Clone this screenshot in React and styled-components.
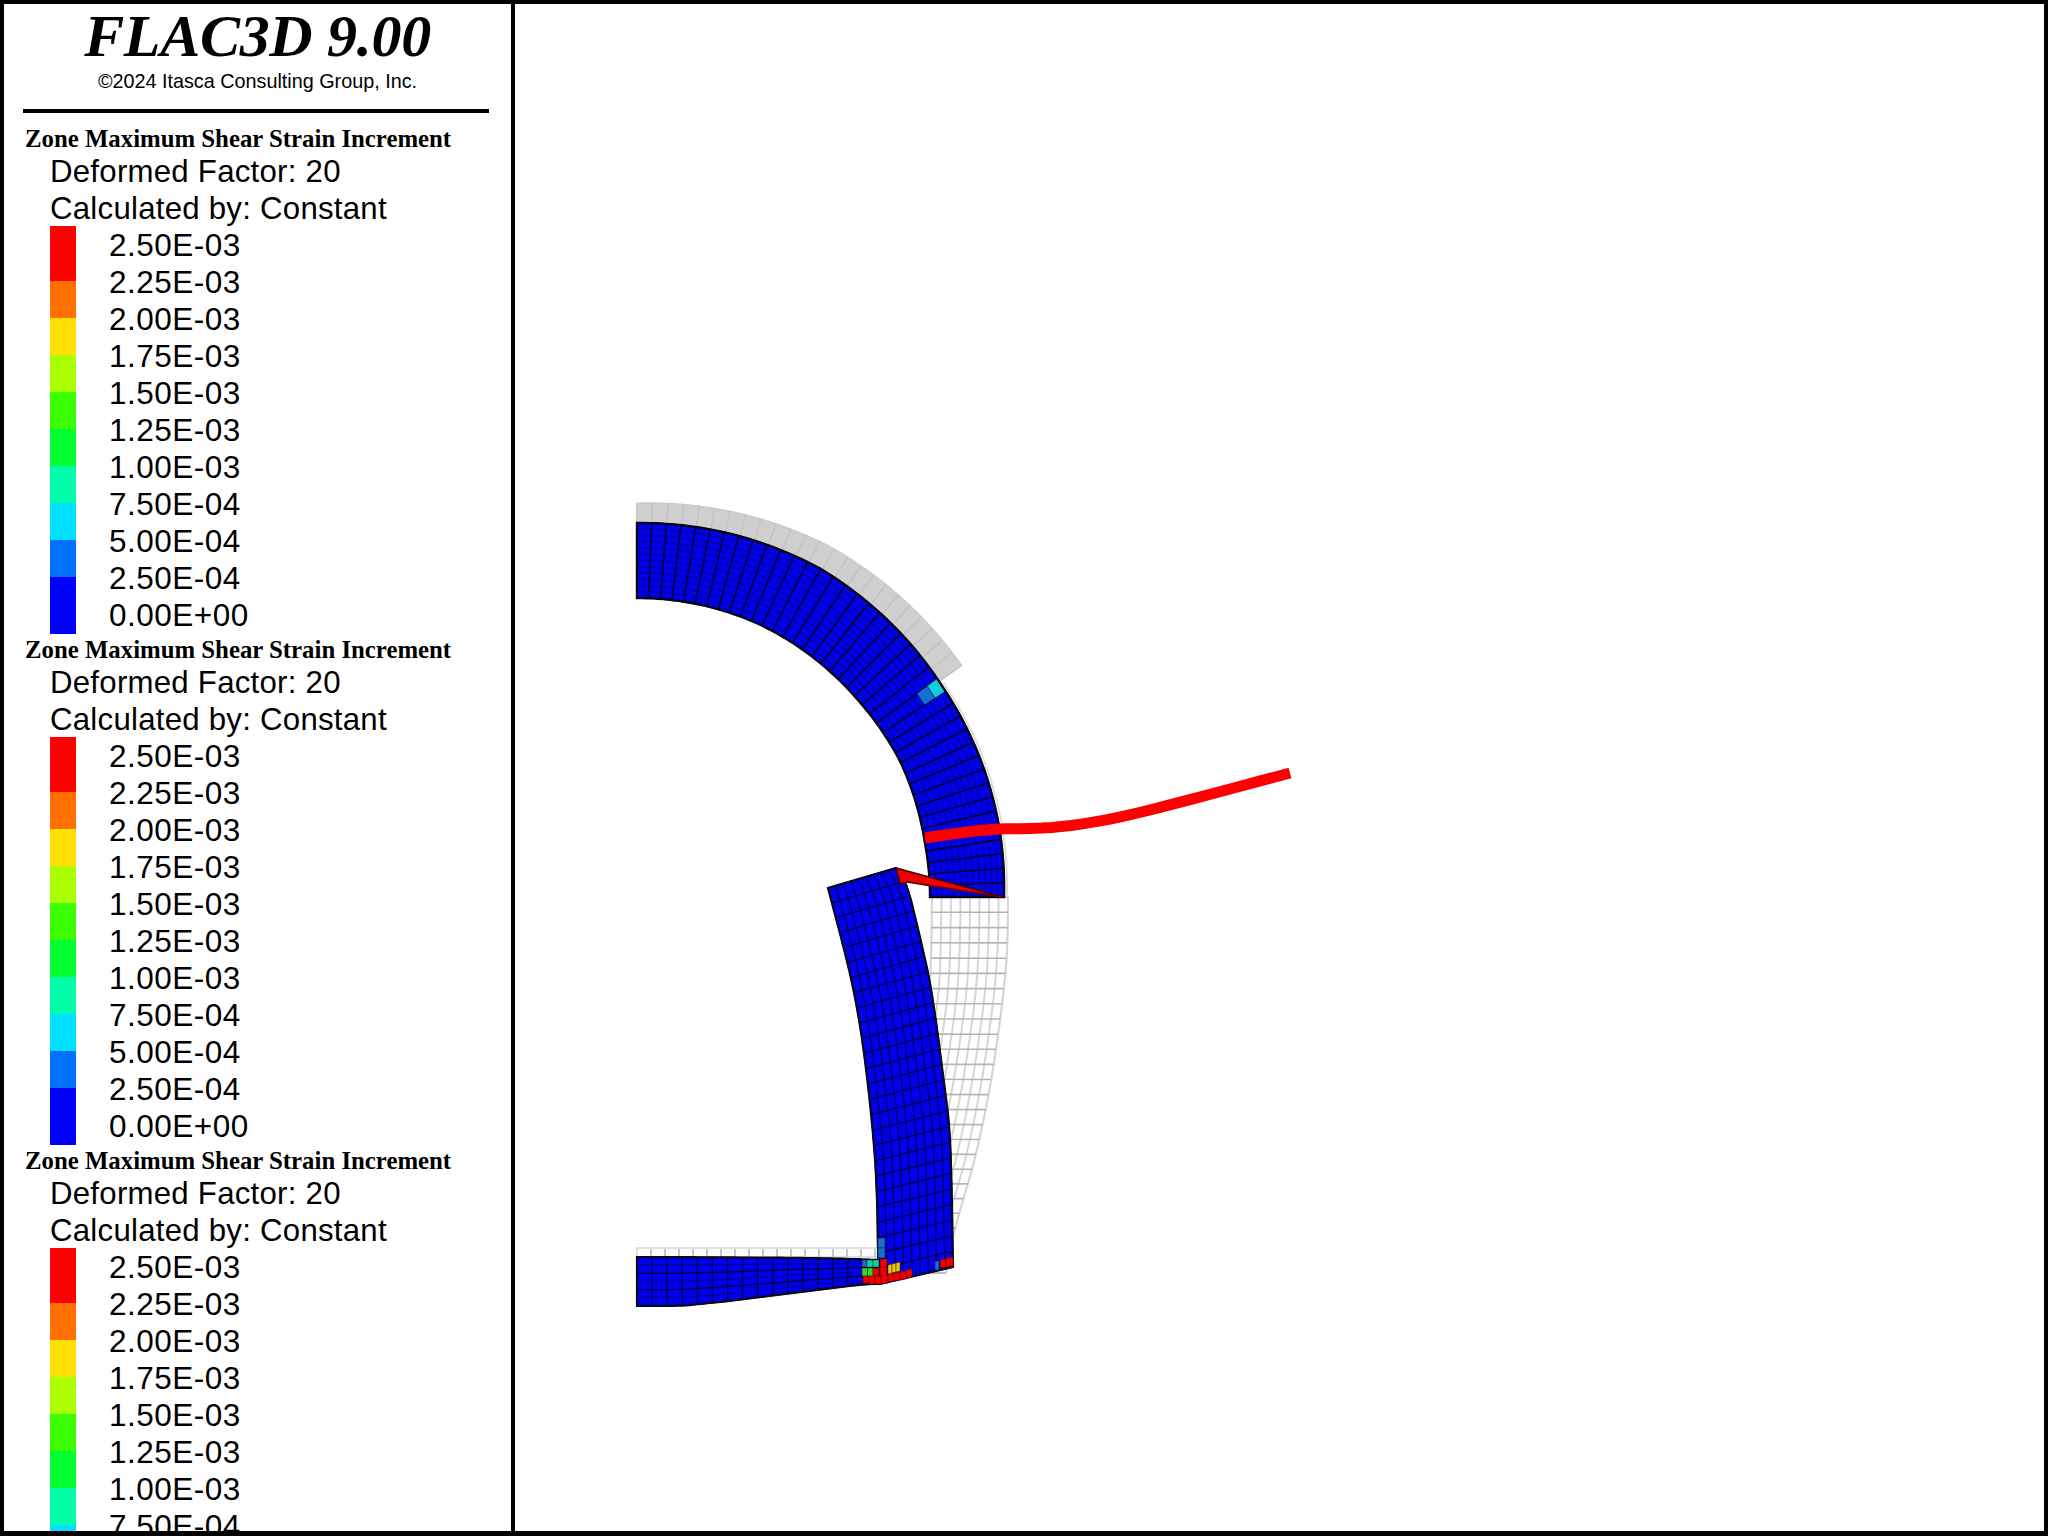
import React from "react";
import styled, { createGlobalStyle } from "styled-components";

const GlobalStyle = createGlobalStyle`
  html, body {
    margin: 0;
    padding: 0;
    background: #fff;
  }
`;

const Frame = styled.div`
  width: 2048px;
  height: 1536px;
  box-sizing: border-box;
  border: 4px solid #000;
  border-bottom-width: 5px;
  display: flex;
  overflow: hidden;
  background: #fff;
  color: #000;
`;

const Sidebar = styled.aside`
  width: 511px;
  flex: none;
  box-sizing: border-box;
  border-right: 4px solid #000;
  overflow: hidden;
  display: flex;
  flex-direction: column;
`;

const Header = styled.header`
  height: 119px;
  flex: none;
  padding-top: 3px;
  box-sizing: border-box;
  display: flex;
  flex-direction: column;
  align-items: center;
  position: relative;
`;

const ProductName = styled.h1`
  margin: 0;
  height: 59px;
  font-family: "Liberation Serif", "Times New Roman", serif;
  font-style: italic;
  font-weight: 700;
  font-size: 60px;
  line-height: 59px;
  letter-spacing: -0.3px;
  white-space: nowrap;
`;

const Copyright = styled.div`
  height: 30px;
  margin-top: 1px;
  font-family: "Liberation Sans", Arial, sans-serif;
  font-size: 19.8px;
  line-height: 29px;
  white-space: nowrap;
`;

const Rule = styled.hr`
  position: absolute;
  left: 19px;
  width: 466px;
  top: 105px;
  height: 4px;
  margin: 0;
  border: 0;
  background: #000;
`;

const LegendBlock = styled.section`
  height: 511px;
  flex: none;
  padding-left: 21px;
  box-sizing: border-box;
`;

const LegendTitle = styled.div`
  height: 29px;
  font-family: "Liberation Serif", "Times New Roman", serif;
  font-weight: 700;
  font-size: 24.8px;
  line-height: 32px;
  white-space: nowrap;
`;

const InfoLine = styled.div`
  height: 37px;
  margin-left: 25px;
  font-family: "Liberation Sans", Arial, sans-serif;
  font-size: 31.2px;
  letter-spacing: 0.25px;
  line-height: 39px;
  white-space: nowrap;
`;

const Scale = styled.div`
  display: flex;
  margin-left: 25px;
`;

const ColorBar = styled.div`
  width: 26px;
  height: 408px;
  flex: none;
  display: flex;
  flex-direction: column;
`;

const ColorStep = styled.div`
  height: ${(props) => props.$size}px;
  background: ${(props) => props.$color};
`;

const ScaleLabels = styled.div`
  margin-left: 33px;
`;

const ScaleLabel = styled.div`
  height: 37px;
  font-family: "Liberation Sans", Arial, sans-serif;
  font-size: 31.5px;
  letter-spacing: 0.5px;
  line-height: 38px;
  white-space: nowrap;
`;

const Viewport = styled.main`
  flex: 1;
  min-width: 0;
`;

const PlotSvg = styled.svg`
  display: block;
  width: 1529px;
  height: 1527px;
`;

const STEPS = [
  ["#ff0000", 55],
  ["#ff7000", 37],
  ["#ffe000", 37],
  ["#aaff00", 37],
  ["#3cff00", 37],
  ["#00ff33", 37],
  ["#00ffaa", 37],
  ["#00e0ff", 37],
  ["#0070ff", 37],
  ["#0000ff", 57],
];

const LABELS = [
  "2.50E-03",
  "2.25E-03",
  "2.00E-03",
  "1.75E-03",
  "1.50E-03",
  "1.25E-03",
  "1.00E-03",
  "7.50E-04",
  "5.00E-04",
  "2.50E-04",
  "0.00E+00",
];

// mesh geometry, everything in page pixels
const table = (rows, x) => {
  for (let i = 1; i < rows.length; i++) {
    if (x <= rows[i][0]) {
      const [x0, y0] = rows[i - 1];
      const [x1, y1] = rows[i];
      return y0 + ((y1 - y0) * (x - x0)) / (x1 - x0);
    }
  }
  return rows[rows.length - 1][1];
};

// corner cutting, keeps the two end points
const smooth = (pts, rounds = 3) => {
  let cur = pts;
  for (let r = 0; r < rounds; r++) {
    const next = [cur[0]];
    for (let i = 0; i < cur.length - 1; i++) {
      const [ax, ay] = cur[i];
      const [bx, by] = cur[i + 1];
      if (i > 0) next.push([ax * 0.75 + bx * 0.25, ay * 0.75 + by * 0.25]);
      if (i < cur.length - 2) next.push([ax * 0.25 + bx * 0.75, ay * 0.25 + by * 0.75]);
    }
    next.push(cur[cur.length - 1]);
    cur = next;
  }
  return cur;
};

const along = (pts, t) => {
  const lens = [0];
  for (let i = 1; i < pts.length; i++) {
    lens.push(lens[i - 1] + Math.hypot(pts[i][0] - pts[i - 1][0], pts[i][1] - pts[i - 1][1]));
  }
  const d = t * lens[lens.length - 1];
  for (let i = 1; i < pts.length; i++) {
    if (d <= lens[i] || i === pts.length - 1) {
      const k = (d - lens[i - 1]) / (lens[i] - lens[i - 1]);
      return [
        pts[i - 1][0] + (pts[i][0] - pts[i - 1][0]) * k,
        pts[i - 1][1] + (pts[i][1] - pts[i - 1][1]) * k,
      ];
    }
  }
  return pts[0];
};

const fmt = (p) => `${p[0].toFixed(1)} ${p[1].toFixed(1)}`;

const line = (fn, n = 24) => {
  const out = [];
  for (let i = 0; i <= n; i++) out.push(fmt(fn(i / n)));
  return "M" + out.join("L");
};

const family = (count, fn, n, skip = () => false) => {
  let d = "";
  for (let i = 0; i <= count; i++) {
    if (!skip(i)) d += line((s) => fn(i / count, s), n);
  }
  return d;
};

const outline = (at, n = 60) => {
  const a = [];
  for (let i = 0; i <= n; i++) a.push(fmt(at(i / n, 0)));
  for (let i = n; i >= 0; i--) a.push(fmt(at(i / n, 1)));
  return "M" + a.join("L") + "Z";
};

const CX = 637;
const CY = 897;
const OUTER = [[0, 374], [29, 376], [55, 371], [68, 370], [78, 369], [90, 367]];
const INNER = [[0, 299], [23, 299], [48, 296], [63, 296], [79, 293], [90, 293]];

const polar = (deg, r) => {
  const a = (deg * Math.PI) / 180;
  return [CX + r * Math.sin(a), CY - r * Math.cos(a)];
};

const archAt = (u, v) => {
  const th = u * 90;
  const rin = table(INNER, th);
  const rout = table(OUTER, th);
  return polar(th, rin + (rout - rin) * v);
};

const liningAt = (u, v) => {
  const th = u * 54.5;
  const rout = table(OUTER, th);
  return polar(th, rout + v * (20 + (8 * th) / 55));
};

const between = (a, b) => {
  const sa = smooth(a);
  const sb = smooth(b);
  return (u, v) => {
    const p = along(sa, u);
    const q = along(sb, u);
    return [p[0] + (q[0] - p[0]) * v, p[1] + (q[1] - p[1]) * v];
  };
};

const wallAt = between(
  [[828, 888], [841, 937], [854, 990], [864, 1050], [873, 1130], [877, 1190], [878, 1257], [880, 1284]],
  [[896, 868], [907, 883], [920, 937], [932, 990], [945, 1090], [950, 1130], [952, 1200], [953, 1267]]
);

const ghostWallAt = between(
  [[932, 897], [931, 973], [927, 1015], [915, 1090], [900, 1160], [888, 1200], [878, 1240], [873, 1273]],
  [[1008, 897], [1008, 930], [1006, 970], [1001, 1015], [990, 1090], [975, 1160], [963, 1200], [952, 1240], [946, 1273]]
);

const floorAt = between(
  [[637, 1257], [753, 1257.5], [813, 1258], [853, 1259], [878, 1260]],
  [[637, 1306], [680, 1306], [700, 1304], [730, 1301], [863, 1284], [878, 1284]]
);

const archCell = (col, layerFrom, layerTo) => {
  const a = [];
  for (const [u, v] of [[col, layerFrom], [col + 1, layerFrom], [col + 1, layerTo], [col, layerTo]]) {
    a.push(fmt(archAt(u / 40, v / 12)));
  }
  return "M" + a.join("L") + "Z";
};

const BOLT = smooth(
  [[925, 838], [986, 829], [1038, 828.5], [1075, 825.5], [1127, 816], [1200, 797], [1290, 773]],
  2
);

const RED = "#f00000";
const BLUE = "#1470d0";

// zones that picked up some strain near the wall foot, as [fill, x, y, w, h, skew]
const HOT_ZONES = [
  [BLUE, 878, 1238, 7, 10, 0],
  [BLUE, 878, 1248, 7, 10, 0],
  [BLUE, 862, 1260, 5, 7, 0],
  ["#00d8a0", 867, 1260, 6, 7, 0],
  ["#00d8a0", 873, 1260, 6, 7, 0],
  ["#20e020", 862, 1268, 5.5, 8, 0],
  ["#20e020", 867.5, 1268, 5.5, 8, 0],
  [RED, 873, 1268, 6, 8, 0],
  [RED, 863, 1276, 6, 7, 0],
  [RED, 869, 1276, 6, 8, 0],
  [RED, 875, 1276, 6, 8, 0],
  [RED, 880, 1259, 7, 8, 0],
  [RED, 880, 1267, 7, 9, 0],
  [RED, 881, 1276, 7, 8, -1],
  [RED, 888, 1274, 6, 8, -1],
  [RED, 894, 1273, 6, 8, -1],
  [RED, 900, 1272, 6, 8, -1],
  [RED, 906, 1270, 6, 8, -1],
  ["#e8c800", 888, 1265, 4, 9, -1],
  ["#e8c800", 892, 1264, 4, 9, -1],
  ["#e8c800", 896, 1263, 4, 9, -1],
  [BLUE, 935, 1261, 4, 9, 0],
  [RED, 940, 1260, 6, 8, -1],
  [RED, 946, 1258, 7, 9, -1],
];

const MeshPlot = () => (
  <PlotSvg viewBox="515 4 1529 1527">
    {/* undeformed ghost of the lining */}
    <path d={outline(ghostWallAt)} fill="#fff" stroke="#e6e6e6" strokeWidth="2" />
    <path d={family(8, (u, s) => ghostWallAt(s, u), 30)} fill="none" stroke="#d6d6d6" strokeWidth="2" />
    <path d={family(25, (u, s) => ghostWallAt(u, s), 1)} fill="none" stroke="#b4b4b4" strokeWidth="1.6" />
    <path d={line((s) => polar(55 + 35 * s, table(OUTER, 55 + 35 * s) + 3))} fill="none" stroke="#dedede" strokeWidth="2" />
    <path d={outline(liningAt)} fill="#cfcfcf" stroke="#c6c6c6" strokeWidth="1" />
    <path d={family(24, liningAt, 1)} fill="none" stroke="#c0c0c0" strokeWidth="1.2" />
    <path d="M637 1248H880V1257H637Z" fill="#fff" stroke="#e0e0e0" strokeWidth="2" />
    <path d={Array.from({ length: 17 }, (_, i) => `M${651 + i * 14} 1249V1257`).join("")} stroke="#c8c8c8" strokeWidth="2" />

    {/* floor */}
    <path d={outline(floorAt)} fill="#0000ea" />
    <path d={family(6, (v, s) => floorAt(s, v), 20, (i) => i % 2 === 0)} fill="none" stroke="#0000a8" strokeWidth="1.2" />
    <path d={family(6, (v, s) => floorAt(s, v), 20, (i) => i % 2 === 1)} fill="none" stroke="#00004a" strokeWidth="1.4" />
    <path d={family(16, floorAt, 1)} fill="none" stroke="#00004a" strokeWidth="1.4" />
    <path d={outline(floorAt)} fill="none" stroke="#0a0a1e" strokeWidth="2.2" />

    {/* side wall */}
    <path d={outline(wallAt)} fill="#0000ea" />
    <path d={family(9, (v, s) => wallAt(s, v), 40)} fill="none" stroke="#000064" strokeWidth="1.3" />
    <path d={family(26, wallAt, 1)} fill="none" stroke="#00004a" strokeWidth="1.4" />
    <path d={outline(wallAt)} fill="none" stroke="#0a0a1e" strokeWidth="2.2" />

    {HOT_ZONES.map(([fill, x, y, w, h, skew], i) => (
      <path
        key={i}
        d={`M${x} ${y}L${x + w} ${y + skew}V${y + h + skew}L${x} ${y + h}Z`}
        fill={fill}
        stroke="#400000"
        strokeOpacity="0.55"
        strokeWidth="0.8"
      />
    ))}

    {/* arch */}
    <path d={outline(archAt)} fill="#0000ea" />
    <path d={family(12, (v, s) => archAt(s, v), 80)} fill="none" stroke="#0000ac" strokeWidth="1.6" />
    <path d={family(40, archAt, 1)} fill="none" stroke="#00003c" strokeWidth="1.7" />
    <path d={archCell(24, 10, 12)} fill="#10d0e0" stroke="#087080" strokeWidth="0.8" />
    <path d={archCell(24, 8, 10)} fill={BLUE} stroke="#083878" strokeWidth="0.8" />
    <path d={outline(archAt, 90)} fill="none" stroke="#05051a" strokeWidth="2.4" />

    {/* separation wedge at the crown of the side wall */}
    <path d="M896 868L1003 897L907 882L900 884Z" fill="#f00000" stroke="#3a0000" strokeWidth="1.6" strokeLinejoin="round" />
    <path d="M920 884L1003 897" stroke="#800000" strokeWidth="1.2" fill="none" />

    {/* bolt */}
    <path d={"M" + BOLT.map(fmt).join("L")} fill="none" stroke="#ff0000" strokeWidth="11" />
  </PlotSvg>
);

const Legend = () => (
  <LegendBlock>
    <LegendTitle>Zone Maximum Shear Strain Increment</LegendTitle>
    <InfoLine>Deformed Factor: 20</InfoLine>
    <InfoLine>Calculated by: Constant</InfoLine>
    <Scale>
      <ColorBar>
        {STEPS.map(([color, size]) => (
          <ColorStep key={color} $color={color} $size={size} />
        ))}
      </ColorBar>
      <ScaleLabels>
        {LABELS.map((label) => (
          <ScaleLabel key={label}>{label}</ScaleLabel>
        ))}
      </ScaleLabels>
    </Scale>
  </LegendBlock>
);

export default function App() {
  return (
    <>
      <GlobalStyle />
      <Frame>
        <Sidebar>
          <Header>
            <ProductName>FLAC3D 9.00</ProductName>
            <Copyright>©2024 Itasca Consulting Group, Inc.</Copyright>
            <Rule />
          </Header>
          <Legend />
          <Legend />
          <Legend />
        </Sidebar>
        <Viewport>
          <MeshPlot />
        </Viewport>
      </Frame>
    </>
  );
}
